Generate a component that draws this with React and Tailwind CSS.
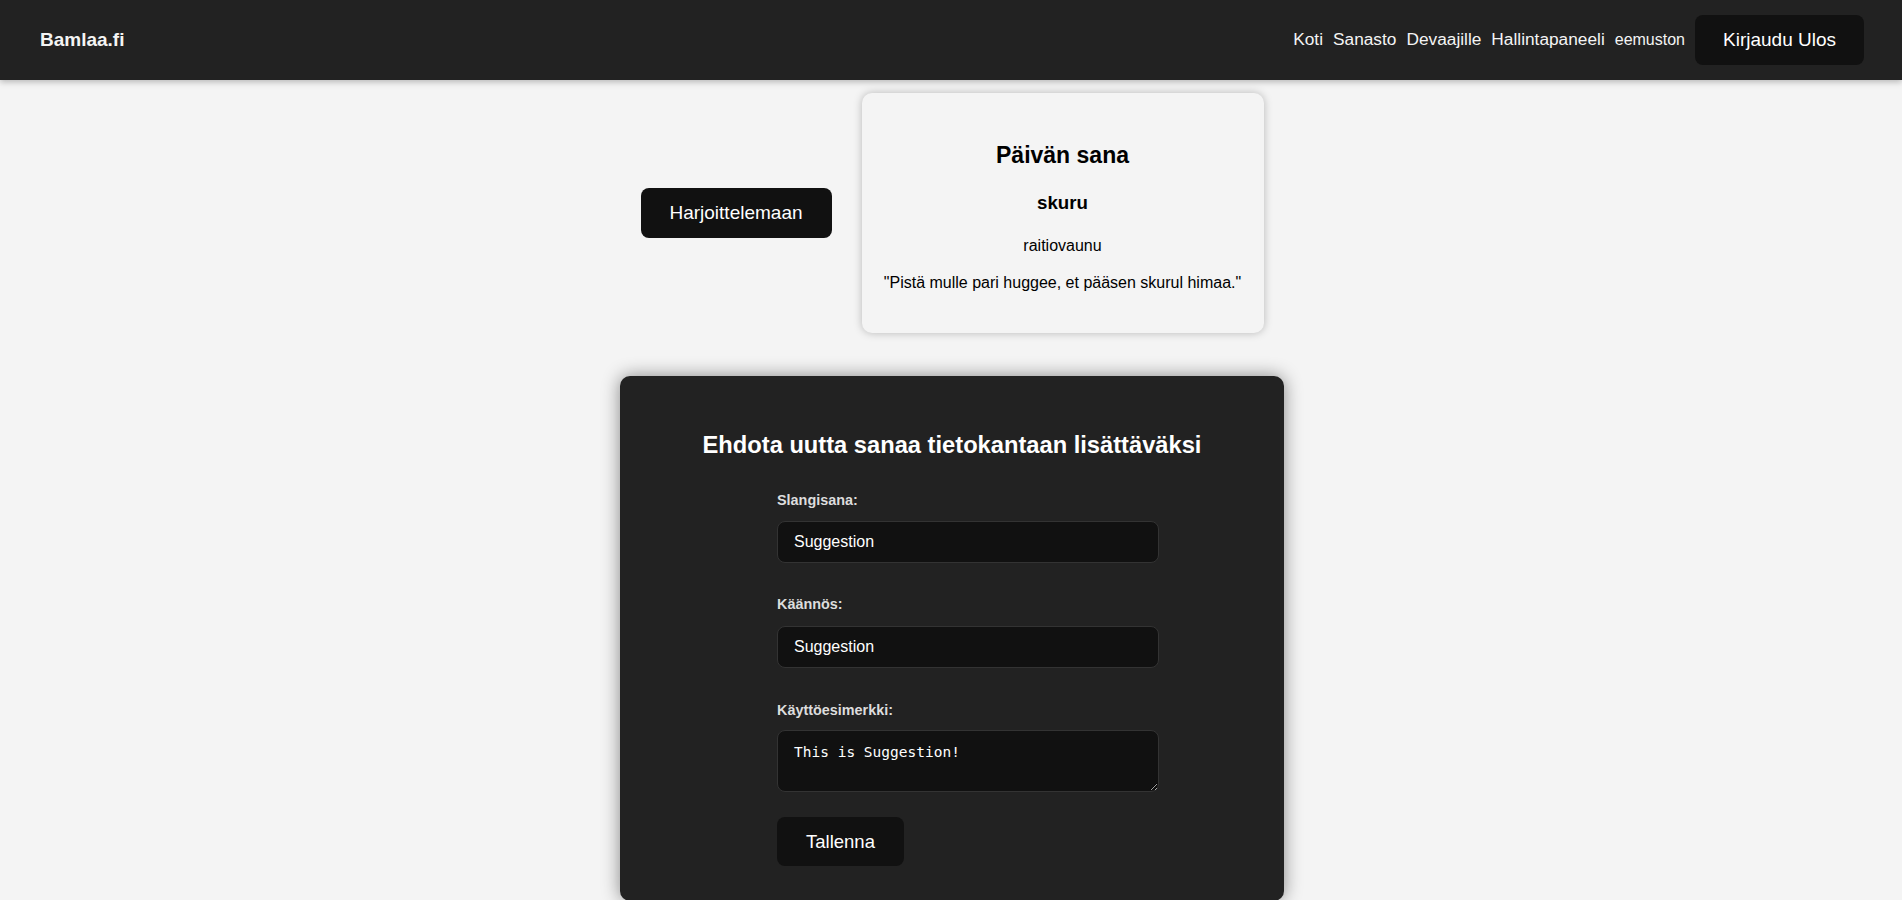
import React, { useState } from "react";

const sans = { fontFamily: '"Liberation Sans", Arial, sans-serif' };

const Navbar = () => {
  const links = ["Koti", "Sanasto", "Devaajille", "Hallintapaneeli"];
  return (
    <nav className="h-[80px] bg-[#222] pl-10 pr-[38px] flex items-center justify-between shadow-[0_2px_6px_rgba(0,0,0,0.25)] relative z-10">
      <div className="text-[19px] font-bold text-[#f4f4f4]">Bamlaa.fi</div>
      <div className="flex items-center gap-2.5 text-[#f4f4f4]">
        {links.map((l) => (
          <a key={l} className="text-[17.3px] cursor-pointer">
            {l}
          </a>
        ))}
        <span className="text-[16px]">eemuston</span>
        <button className="h-[50px] px-7 rounded-lg bg-[#111] text-white text-[19px] cursor-pointer">
          Kirjaudu Ulos
        </button>
      </div>
    </nav>
  );
};

const WordOfDay = () => {
  return (
    <div className="mt-[13px] flex items-center gap-[30px]">
      <button className="w-[191px] h-[50px] rounded-lg bg-[#111] text-white text-[19px] cursor-pointer">
        Harjoittelemaan
      </button>
      <div className="w-[402px] h-[240px] rounded-[10px] bg-[#f4f4f4] shadow-[0_0_8px_rgba(0,0,0,0.25)] flex flex-col items-center pt-[48px] text-black">
        <h2 className="text-[23px] leading-[28px] font-bold">Päivän sana</h2>
        <h3 className="mt-[22px] text-[18.7px] leading-[24px] font-bold">skuru</h3>
        <p className="mt-[21px] text-[16px] leading-[20px]">raitiovaunu</p>
        <p className="mt-[17px] text-[16px] leading-[20px]">
          "Pistä mulle pari huggee, et pääsen skurul himaa."
        </p>
      </div>
    </div>
  );
};

const SuggestForm = () => {
  const [word, setWord] = useState({
    slang: "Suggestion",
    translation: "Suggestion",
    example: "This is Suggestion!",
  });
  const handleChange = (e) => {
    setWord({ ...word, [e.target.name]: e.target.value });
  };
  const handleSubmit = (e) => {
    e.preventDefault();
  };

  return (
    <div className="mt-[43px] w-[664px] rounded-[10px] bg-[#222] pt-[54px] pb-[35px] shadow-[0_0_18px_rgba(0,0,0,0.45)]">
      <h2 className="text-center text-[23.7px] leading-[30px] font-bold text-white">
        Ehdota uutta sanaa tietokantaan lisättäväksi
      </h2>
      <form onSubmit={handleSubmit} className="pl-[157px] mt-[30px] flex flex-col items-start">
        <label className="block text-[14.4px] leading-[20px] font-bold text-[#ddd]">
          Slangisana:
        </label>
        <input
          className="mt-[11px] w-[382px] h-[42px] rounded-lg border border-[#333] bg-[#111] px-4 text-[16px] text-white outline-none"
          type="text"
          name="slang"
          value={word.slang}
          onChange={handleChange}
        />
        <label className="mt-[31px] block text-[14.4px] leading-[20px] font-bold text-[#ddd]">
          Käännös:
        </label>
        <input
          className="mt-[12px] w-[382px] h-[42px] rounded-lg border border-[#333] bg-[#111] px-4 text-[16px] text-white outline-none"
          type="text"
          name="translation"
          value={word.translation}
          onChange={handleChange}
        />
        <label className="mt-[32px] block text-[14.4px] leading-[20px] font-bold text-[#ddd]">
          Käyttöesimerkki:
        </label>
        <textarea
          className="mt-[10px] w-[382px] h-[62px] rounded-lg border border-[#333] bg-[#111] px-4 py-3 text-[14.5px] leading-[18px] text-white outline-none"
          style={{ fontFamily: '"DejaVu Sans Mono", "Liberation Mono", monospace' }}
          name="example"
          value={word.example}
          onChange={handleChange}
        />
        <button
          type="submit"
          className="mt-[25px] w-[127px] h-[49px] rounded-lg bg-[#111] text-white text-[18.5px] cursor-pointer"
        >
          Tallenna
        </button>
      </form>
    </div>
  );
};

export default function App() {
  return (
    <div className="min-h-screen bg-[#f4f4f4]" style={sans}>
      <Navbar />
      <main className="ml-[2px] flex flex-col items-center pb-10">
        <WordOfDay />
        <SuggestForm />
      </main>
    </div>
  );
}
